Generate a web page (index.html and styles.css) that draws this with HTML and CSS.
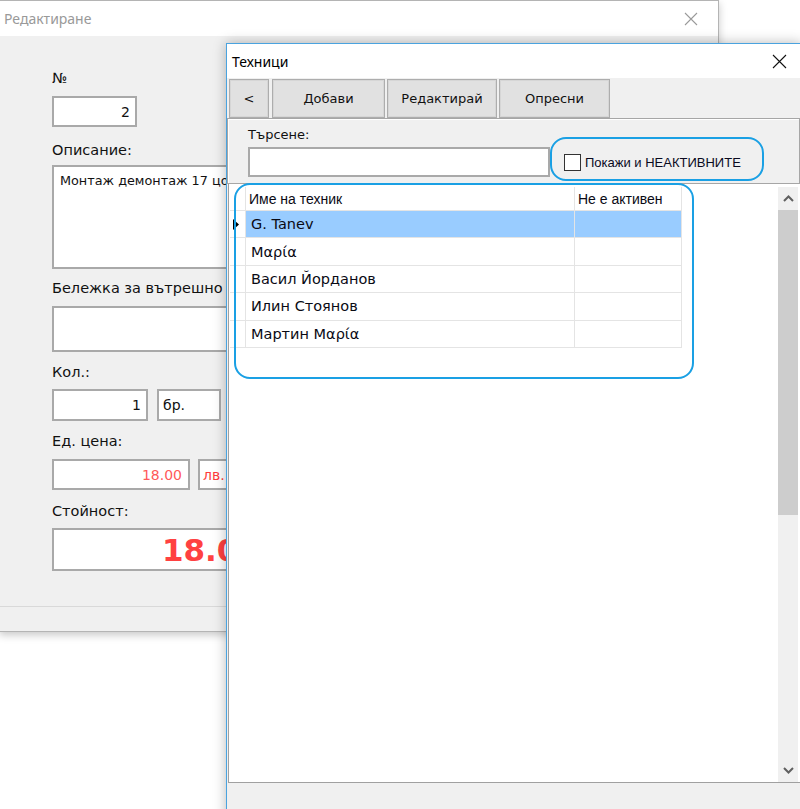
FILE: index.html
```html
<!DOCTYPE html>
<html lang="bg">
<head>
<meta charset="utf-8">
<title>Техници</title>
<link rel="stylesheet" href="styles.css">
</head>
<body>
<div class="win win-edit">
  <div class="titlebar">
    <span class="title title-inactive">Редактиране</span>
    <svg class="close close-inactive" width="14" height="14" viewBox="0 0 14 14"><path d="M1 1L13 13M13 1L1 13" stroke="#9a9a9a" stroke-width="1.1" fill="none"/></svg>
  </div>
  <div class="edit-body">
    <div class="lbl lbl-no">№</div>
    <div class="box box-no">2</div>
    <div class="lbl lbl-desc">Описание:</div>
    <div class="box box-desc">Монтаж демонтаж 17 цола</div>
    <div class="lbl lbl-note">Бележка за вътрешно</div>
    <div class="box box-note"></div>
    <div class="lbl lbl-qty">Кол.:</div>
    <div class="pair pair-qty">
      <div class="box box-qty">1</div>
      <div class="box box-unit">бр.</div>
    </div>
    <div class="lbl lbl-price">Ед. цена:</div>
    <div class="pair pair-price">
      <div class="box box-price">18.00</div>
      <div class="box box-cur">лв.</div>
    </div>
    <div class="lbl lbl-total">Стойност:</div>
    <div class="box box-total">18.00</div>
  </div>
  <div class="edit-footer"></div>
</div>

<div class="win win-tech">
  <div class="titlebar tech-title">
    <span class="title">Техници</span>
    <svg class="close" width="15" height="15" viewBox="0 0 15 15"><path d="M1 1L14 14M14 1L1 14" stroke="#111" stroke-width="1.1" fill="none"/></svg>
  </div>
  <div class="toolbar">
    <button class="btn btn-back">&lt;</button>
    <button class="btn btn-add">Добави</button>
    <button class="btn btn-edit">Редактирай</button>
    <button class="btn btn-refresh">Опресни</button>
  </div>
  <div class="search-panel">
    <div class="search-lbl">Търсене:</div>
    <div class="search-row">
      <div class="search-input"></div>
      <label class="chk-wrap"><span class="chk"></span><span class="chk-text">Покажи и НЕАКТИВНИТЕ</span></label>
    </div>
  </div>
  <div class="grid">
    <div class="grid-area">
      <div class="grow ghead">
        <div class="rh"></div>
        <div class="cell c1">Име на техник</div>
        <div class="cell c2">Не е активен</div>
      </div>
      <div class="grow sel">
        <div class="rh"><svg width="6" height="11" viewBox="0 0 6 11"><path d="M0 0L6 5.5L0 11Z" fill="#000"/></svg></div>
        <div class="cell c1">G. Tanev</div>
        <div class="cell c2"></div>
      </div>
      <div class="grow">
        <div class="rh"></div>
        <div class="cell c1">Μαρία</div>
        <div class="cell c2"></div>
      </div>
      <div class="grow">
        <div class="rh"></div>
        <div class="cell c1">Васил Йорданов</div>
        <div class="cell c2"></div>
      </div>
      <div class="grow">
        <div class="rh"></div>
        <div class="cell c1">Илин Стоянов</div>
        <div class="cell c2"></div>
      </div>
      <div class="grow">
        <div class="rh"></div>
        <div class="cell c1">Мартин Μαρία</div>
        <div class="cell c2"></div>
      </div>
    </div>
    <div class="vscroll">
      <div class="sb-btn"><svg width="11" height="7" viewBox="0 0 11 7"><path d="M1 6L5.5 1.5L10 6" stroke="#606060" stroke-width="2" fill="none"/></svg></div>
      <div class="sb-track"><div class="sb-thumb"></div></div>
      <div class="sb-btn"><svg width="11" height="7" viewBox="0 0 11 7"><path d="M1 1L5.5 5.5L10 1" stroke="#606060" stroke-width="2" fill="none"/></svg></div>
    </div>
  </div>
  <div class="statusbar"></div>
</div>

<div class="mark mark-chk"></div>
<div class="mark mark-grid"></div>
</body>
</html>
```
FILE: styles.css
```css
html, body {
  margin: 0;
  padding: 0;
}
body {
  width: 800px;
  height: 809px;
  overflow: hidden;
  position: relative;
  background: #ffffff;
  font-family: "DejaVu Sans", Verdana, sans-serif;
  color: #000;
}
.win {
  position: absolute;
  box-sizing: border-box;
  background: #f0f0f0;
  display: flex;
  flex-direction: column;
}
.win-edit {
  left: -1px;
  top: 0;
  width: 720px;
  height: 632px;
  border: 1px solid #b4b4b4;
  box-shadow: 0 3px 8px rgba(0, 0, 0, 0.22);
}
.titlebar {
  height: 35px;
  flex: 0 0 auto;
  background: #ffffff;
  display: flex;
  align-items: center;
  padding-left: 4px;
}
.title {
  font-family: "Noto Sans", "Open Sans", sans-serif;
  font-size: 14px;
  color: #000;
}
.title-inactive {
  color: #999999;
}
.close {
  margin-left: auto;
  margin-right: 20px;
}
.close-inactive {
  margin-right: 20px;
}
.edit-body {
  height: 570px;
  flex: 0 0 auto;
  box-sizing: border-box;
  padding: 33px 0 0 52px;
  display: flex;
  flex-direction: column;
  align-items: flex-start;
}
.lbl {
  font-size: 14.5px;
  line-height: 18px;
  height: 18px;
  color: #111;
}
.box {
  box-sizing: border-box;
  background: #fff;
  border: 2px solid #a9a9a9;
  font-size: 14px;
  line-height: 18px;
  color: #111;
  white-space: nowrap;
  overflow: hidden;
}
.box-no {
  margin-top: 9px;
  width: 85px;
  height: 31px;
  text-align: right;
  padding: 5px 5px 0 0;
}
.lbl-desc { margin-top: 14px; }
.box-desc {
  margin-top: 6px;
  width: 600px;
  height: 104px;
  padding: 5px 0 0 6px;
  font-size: 12.8px;
}
.lbl-note { margin-top: 10px; }
.box-note {
  margin-top: 9px;
  width: 600px;
  height: 46px;
}
.lbl-qty { margin-top: 11px; }
.pair {
  display: flex;
  gap: 9px;
}
.pair-qty { margin-top: 8px; }
.box-qty {
  width: 96px;
  height: 32px;
  text-align: right;
  padding: 5px 5px 0 0;
}
.box-unit {
  width: 64px;
  height: 32px;
  padding: 5px 0 0 4px;
}
.lbl-price { margin-top: 11px; }
.pair-price { margin-top: 9px; gap: 8px; }
.box-price {
  width: 138px;
  height: 31px;
  text-align: right;
  padding: 5px 6px 0 0;
  color: #ff5a5a;
}
.box-cur {
  width: 64px;
  height: 31px;
  padding: 5px 0 0 3px;
  color: #ff3c3c;
}
.lbl-total { margin-top: 12px; }
.box-total {
  margin-top: 8px;
  width: 216px;
  height: 43px;
  text-align: right;
  padding: 2px 6px 0 0;
  font-size: 31px;
  line-height: 36px;
  font-weight: bold;
  color: #ff4141;
}
.edit-footer {
  flex: 1 1 auto;
  border-top: 1px solid #d9d9d9;
}

/* Техници window */
.win-tech {
  left: 226px;
  top: 43px;
  width: 576px;
  height: 800px;
  border: 1px solid #4aa3df;
  box-shadow: 0 0 12px rgba(0, 0, 0, 0.28);
}
.tech-title {
  height: 34px;
  padding-left: 5px;
}
.tech-title .close {
  margin-right: 14px;
}
.toolbar {
  height: 40px;
  flex: 0 0 auto;
  box-sizing: border-box;
  padding: 1px 0 0 2px;
  display: flex;
  align-items: flex-start;
}
.btn {
  box-sizing: border-box;
  height: 39px;
  margin: 0;
  padding: 0;
  background: #e1e1e1;
  border: 1px solid #adadad;
  box-shadow: inset 0 0 0 1px #d6d6d6;
  font-family: "DejaVu Sans", Verdana, sans-serif;
  font-size: 13px;
  color: #111;
}
.btn-back { width: 40px; }
.btn-add { width: 113px; margin-left: 3px; }
.btn-edit { width: 110px; margin-left: 2px; }
.btn-refresh { width: 111px; margin-left: 2px; }
.search-panel {
  box-sizing: border-box;
  width: 573px;
  height: 66px;
  flex: 0 0 auto;
  border: 1px solid #a6a6a6;
  box-shadow: inset 1px 1px 0 #ffffff;
  padding: 8px 0 0 20px;
}
.search-lbl {
  font-size: 13px;
  line-height: 16px;
  color: #111;
}
.search-row {
  margin-top: 4px;
  display: flex;
  align-items: center;
}
.search-input {
  box-sizing: border-box;
  width: 302px;
  height: 30px;
  background: #fff;
  border: 2px solid #a9a9a9;
}
.chk-wrap {
  margin-left: 14px;
  display: flex;
  align-items: center;
  gap: 4px;
}
.chk {
  box-sizing: border-box;
  width: 17px;
  height: 17px;
  border: 1px solid #333;
  background: #fff;
}
.chk-text {
  font-family: "Liberation Sans", Arial, sans-serif;
  font-size: 13px;
  color: #0a0a1e;
}
.grid {
  box-sizing: border-box;
  margin-left: 1px;
  height: 599px;
  flex: 0 0 auto;
  background: #fff;
  border-left: 1px solid #a0a0a0;
  border-bottom: 1px solid #a0a0a0;
  display: flex;
}
.grid-area {
  flex: 1 1 auto;
  padding: 3px 0 0 1px;
}
.grow {
  display: flex;
  height: 27.4px;
  box-sizing: border-box;
}
.ghead {
  height: 24px;
}
.rh {
  box-sizing: border-box;
  width: 16px;
  border-right: 1px solid #e4e4e4;
  border-bottom: 1px solid #e4e4e4;
  display: flex;
  align-items: center;
  padding-left: 3px;
}
.cell {
  box-sizing: border-box;
  border-right: 1px solid #e4e4e4;
  border-bottom: 1px solid #e4e4e4;
  font-size: 14.5px;
  display: flex;
  align-items: center;
  padding-left: 5px;
  color: #0a0a14;
  white-space: nowrap;
}
.c1 { width: 329px; }
.c2 { width: 107px; }
.ghead .cell {
  font-family: "Liberation Sans", Arial, sans-serif;
  font-size: 14px;
  padding-left: 3px;
}
.sel .cell {
  background: #99ccff;
}
.vscroll {
  width: 20px;
  margin: 3px 3px 0 0;
  display: flex;
  flex-direction: column;
  background: #f0f0f0;
}
.sb-btn {
  height: 23px;
  display: flex;
  align-items: center;
  justify-content: center;
}
.sb-track {
  flex: 1 1 auto;
}
.sb-thumb {
  height: 305px;
  background: #cdcdcd;
}
.statusbar {
  flex: 1 1 auto;
  background: #f0f0f0;
}

/* annotation marks drawn over the screenshot */
.mark {
  position: absolute;
  box-sizing: border-box;
  border: 2px solid #1aa0e4;
  border-radius: 16px;
}
.mark-chk {
  left: 550px;
  top: 137px;
  width: 214px;
  height: 44px;
}
.mark-grid {
  left: 234px;
  top: 183px;
  width: 460px;
  height: 196px;
}
```
